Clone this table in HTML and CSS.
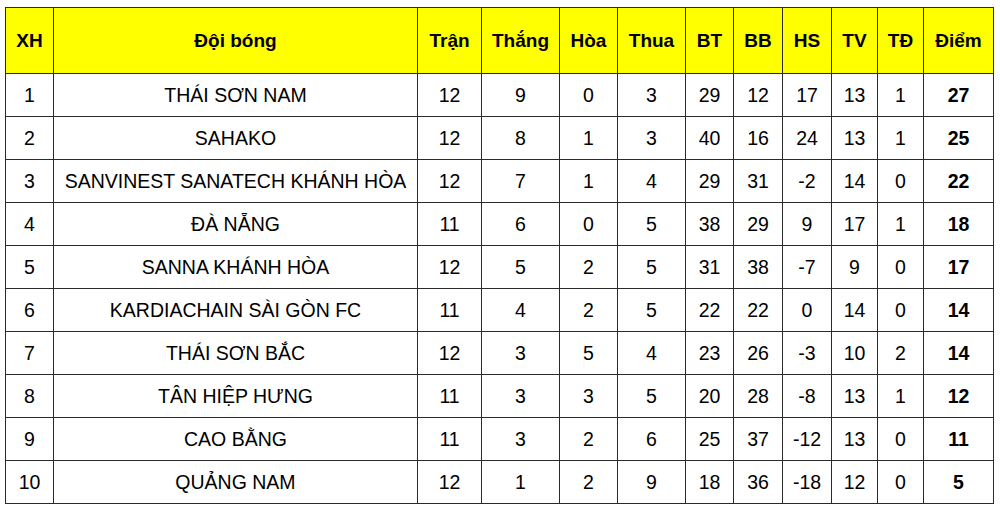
FILE: index.html
```html
<!DOCTYPE html>
<html lang="vi">
<head>
<meta charset="utf-8">
<title>Bảng xếp hạng</title>
<link rel="stylesheet" href="styles.css">
</head>
<body>
<table class="standings">
  <colgroup>
    <col class="c-xh"><col class="c-team"><col class="c-tran"><col class="c-thang"><col class="c-hoa"><col class="c-thua"><col class="c-bt"><col class="c-bb"><col class="c-hs"><col class="c-tv"><col class="c-td"><col class="c-diem">
  </colgroup>
  <thead>
    <tr><th>XH</th><th>Đội bóng</th><th>Trận</th><th>Thắng</th><th>Hòa</th><th>Thua</th><th>BT</th><th>BB</th><th>HS</th><th>TV</th><th>TĐ</th><th>Điểm</th></tr>
  </thead>
  <tbody>
    <tr><td>1</td><td>THÁI SƠN NAM</td><td>12</td><td>9</td><td>0</td><td>3</td><td>29</td><td>12</td><td>17</td><td>13</td><td>1</td><td class="pts">27</td></tr>
    <tr><td>2</td><td>SAHAKO</td><td>12</td><td>8</td><td>1</td><td>3</td><td>40</td><td>16</td><td>24</td><td>13</td><td>1</td><td class="pts">25</td></tr>
    <tr><td>3</td><td>SANVINEST SANATECH KHÁNH HÒA</td><td>12</td><td>7</td><td>1</td><td>4</td><td>29</td><td>31</td><td>-2</td><td>14</td><td>0</td><td class="pts">22</td></tr>
    <tr><td>4</td><td>ĐÀ NẴNG</td><td>11</td><td>6</td><td>0</td><td>5</td><td>38</td><td>29</td><td>9</td><td>17</td><td>1</td><td class="pts">18</td></tr>
    <tr><td>5</td><td>SANNA KHÁNH HÒA</td><td>12</td><td>5</td><td>2</td><td>5</td><td>31</td><td>38</td><td>-7</td><td>9</td><td>0</td><td class="pts">17</td></tr>
    <tr><td>6</td><td>KARDIACHAIN SÀI GÒN FC</td><td>11</td><td>4</td><td>2</td><td>5</td><td>22</td><td>22</td><td>0</td><td>14</td><td>0</td><td class="pts">14</td></tr>
    <tr><td>7</td><td>THÁI SƠN BẮC</td><td>12</td><td>3</td><td>5</td><td>4</td><td>23</td><td>26</td><td>-3</td><td>10</td><td>2</td><td class="pts">14</td></tr>
    <tr><td>8</td><td>TÂN HIỆP HƯNG</td><td>11</td><td>3</td><td>3</td><td>5</td><td>20</td><td>28</td><td>-8</td><td>13</td><td>1</td><td class="pts">12</td></tr>
    <tr><td>9</td><td>CAO BẰNG</td><td>11</td><td>3</td><td>2</td><td>6</td><td>25</td><td>37</td><td>-12</td><td>13</td><td>0</td><td class="pts">11</td></tr>
    <tr><td>10</td><td>QUẢNG NAM</td><td>12</td><td>1</td><td>2</td><td>9</td><td>18</td><td>36</td><td>-18</td><td>12</td><td>0</td><td class="pts">5</td></tr>
  </tbody>
</table>
</body>
</html>
```
FILE: styles.css
```css
html, body {
  margin: 0;
  padding: 0;
  background: #ffffff;
}
body {
  padding: 7px 0 0 5px;
  font-family: "Liberation Sans", Arial, sans-serif;
  color: #000;
}
.standings {
  border-collapse: collapse;
  table-layout: fixed;
  width: 988px;
  font-size: 19.5px;
}
.standings th,
.standings td {
  border: 1px solid #2a2a2a;
  text-align: center;
  vertical-align: middle;
  padding: 0;
  white-space: nowrap;
  overflow: hidden;
}
.standings thead th {
  background: #ffff00;
  font-weight: bold;
  font-size: 19px;
  height: 65px;
}
.standings tbody td {
  height: 42px;
}
.standings .pts {
  font-weight: bold;
}
.c-xh { width: 48px; }
.c-team { width: 364px; }
.c-tran { width: 64px; }
.c-thang { width: 78px; }
.c-hoa { width: 58px; }
.c-thua { width: 68px; }
.c-bt { width: 48px; }
.c-bb { width: 49px; }
.c-hs { width: 49px; }
.c-tv { width: 46px; }
.c-td { width: 46px; }
.c-diem { width: 70px; }
```
